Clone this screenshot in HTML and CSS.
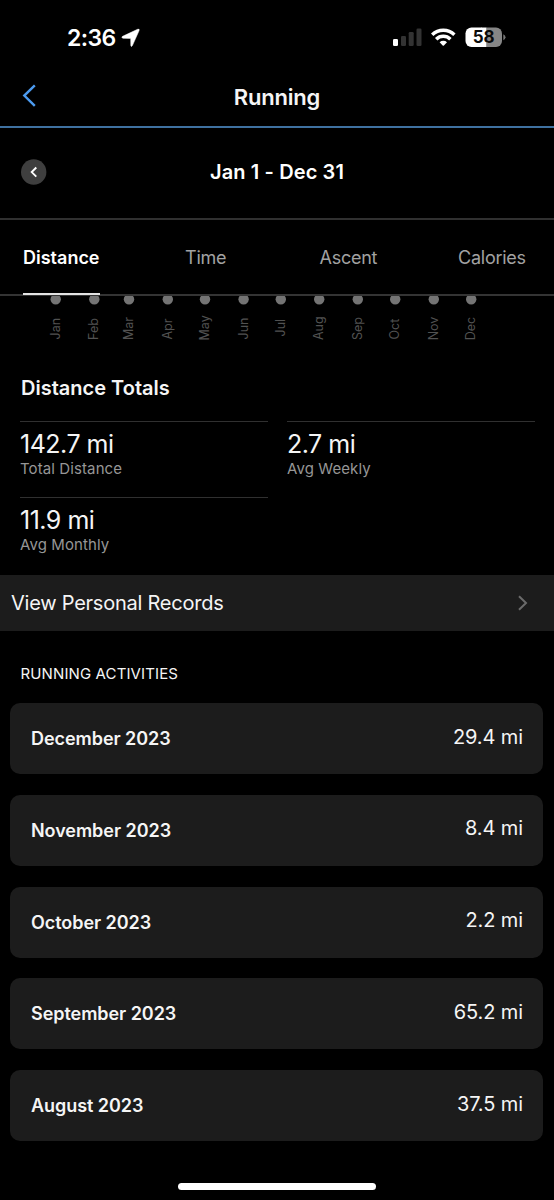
FILE: index.html
```
<!DOCTYPE html>
<html lang="en">
<head>
<meta charset="utf-8">
<title>Running</title>
<link rel="stylesheet" href="styles.css">
</head>
<body>
<div class="screen">
  <header class="status">
    <div class="status-left">
      <span class="clock">2:36</span>
      <svg class="location" width="20" height="20" viewBox="0 0 20 20"><path d="M1.600 8.300 16.600 1.300Q18.900 .5 18 2.800L11.400 17.600Q10.200 19.600 9.800 17.400L9.700 10.400 2 10.300Q-.2 9.600 1.600 8.300Z" fill="#fff" stroke="#fff" stroke-width=".5"/></svg>
    </div>
    <svg class="indicators" width="114" height="22" viewBox="0 0 114 22">
      <rect x="1" y="12" width="5" height="7" rx="1.3" fill="#fff"/>
      <g fill="#333"><rect x="9" y="9" width="5" height="10" rx="1.3"/><rect x="16.7" y="5" width="5" height="14" rx="1.3"/><rect x="24.5" y="1.500" width="5" height="17.500" rx="1.3"/></g>
      <g fill="none" stroke="#fff" stroke-width="3.500"><path d="M40.200 7.700a16.200 16.200 0 0 1 22.200 0"/><path d="M44.200 12.200a10.200 10.200 0 0 1 14.200 0"/></g>
      <path d="M47.600 15.200a5.500 5.500 0 0 1 7.400 0L51.900 18.400Q51.300 18.900 50.700 18.400Z" fill="#fff"/>
      <path d="M79.500.5H89.500V20H79.500A6 6 0 0 1 73.500 14V6.500A6 6 0 0 1 79.500.5Z" fill="#fff"/>
      <path d="M94.500.5H104A6 6 0 0 1 110 6.500V14A6 6 0 0 1 104 20H94.500Z" fill="#868686"/>
      <path d="M89 .5h5.500V20H89Z" fill="#fff"/>
      <path d="M111.300 7.300q2.200.8 2.200 3t-2.200 3Z" fill="#777"/>
      <text class="battery-level" x="91.500" y="16.400" text-anchor="middle">58</text>
    </svg>
  </header>
  <nav class="navbar">
    <svg class="back" width="16" height="24" viewBox="0 0 16 24"><path d="M13.800 2.400 3.300 12.600 13.800 22.900" fill="none" stroke="#4c9bf0" stroke-width="2.400"/></svg>
    <h1 class="title">Running</h1>
  </nav>
  <section class="period">
    <svg class="previous" width="26" height="26" viewBox="0 0 26 26"><circle cx="12.700" cy="13" r="12.700" fill="#3f3f3f"/><path d="M15.300 8.500 10.700 13.100 15.300 17.700" fill="none" stroke="#fff" stroke-width="1.900"/></svg>
    <h2 class="range">Jan 1 - Dec 31</h2>
  </section>
  <div class="tabs">
    <span class="tab active">Distance</span>
    <span class="tab time">Time</span>
    <span class="tab ascent">Ascent</span>
    <span class="tab calories">Calories</span>
  </div>
  <svg class="axis" width="554" height="64" viewBox="0 0 554 64">
    <g fill="#747474"><circle cx="55.700" cy="3.300" r="5.200"/><circle cx="94.300" cy="3.300" r="5.200"/><circle cx="129" cy="3.300" r="5.200"/><circle cx="167.800" cy="3.300" r="5.200"/><circle cx="205" cy="3.300" r="5.200"/><circle cx="243.600" cy="3.300" r="5.200"/><circle cx="280.800" cy="3.300" r="5.200"/><circle cx="319.200" cy="3.300" r="5.200"/><circle cx="357.800" cy="3.300" r="5.200"/><circle cx="395.200" cy="3.300" r="5.200"/><circle cx="433.800" cy="3.300" r="5.200"/><circle cx="471.200" cy="3.300" r="5.200"/></g>
    <g class="months">
      <text transform="translate(60 43.500) rotate(-90)">Jan</text>
      <text transform="translate(98.200 44) rotate(-90)">Feb</text>
      <text transform="translate(133.300 44) rotate(-90)">Mar</text>
      <text transform="translate(172 43.500) rotate(-90)">Apr</text>
      <text transform="translate(209.300 44.500) rotate(-90)">May</text>
      <text transform="translate(248 43.500) rotate(-90)">Jun</text>
      <text transform="translate(285 40.500) rotate(-90)">Jul</text>
      <text transform="translate(323.300 44) rotate(-90)">Aug</text>
      <text transform="translate(362 44) rotate(-90)">Sep</text>
      <text transform="translate(399.300 43.500) rotate(-90)">Oct</text>
      <text transform="translate(438 44.300) rotate(-90)">Nov</text>
      <text transform="translate(475.200 44.300) rotate(-90)">Dec</text>
    </g>
  </svg>
  <section class="totals">
    <h3 class="totals-title">Distance Totals</h3>
    <div class="stats">
      <div class="stat"><span class="value">142.7 mi</span><span class="label">Total Distance</span></div>
      <div class="stat"><span class="value">2.7 mi</span><span class="label">Avg Weekly</span></div>
      <div class="stat"><span class="value">11.9 mi</span><span class="label">Avg Monthly</span></div>
    </div>
  </section>
  <div class="records">
    <span>View Personal Records</span>
    <svg width="10" height="16" viewBox="0 0 10 16"><path d="M1 1.300 8 8 1 14.700" fill="none" stroke="#6b6b6b" stroke-width="2"/></svg>
  </div>
  <section class="activities">
    <h4 class="activities-title">RUNNING ACTIVITIES</h4>
    <div class="card"><span class="month">December 2023</span><span class="miles">29.4 mi</span></div>
    <div class="card"><span class="month">November 2023</span><span class="miles">8.4 mi</span></div>
    <div class="card"><span class="month">October 2023</span><span class="miles">2.2 mi</span></div>
    <div class="card"><span class="month">September 2023</span><span class="miles">65.2 mi</span></div>
    <div class="card"><span class="month">August 2023</span><span class="miles">37.5 mi</span></div>
  </section>
  <div class="home-indicator"></div>
</div>
</body>
</html>
```
FILE: styles.css
```
* { box-sizing: border-box; }
body { margin: 0; background: #000; }
h1, h2, h3, h4 { margin: 0; }
svg { display: block; flex: none; }
.screen {
  width: 554px; height: 1200px; overflow: hidden;
  display: flex; flex-direction: column;
  background: #000; color: #f5f5f5;
  font-family: Inter, "Liberation Sans", sans-serif;
  white-space: nowrap;
}
.status {
  height: 70px; flex: none; padding: 27px 48px 0 67px;
  display: flex; justify-content: space-between; align-items: flex-start;
}
.status-left { display: flex; gap: 5px; }
.clock { font-size: 23px; font-weight: 600; line-height: 22px; letter-spacing: -0.6px; color: #fff; }
.location { margin-top: 1px; }
.battery-level { font-size: 17px; font-weight: 700; letter-spacing: -0.2px; fill: #0a0a0a; }
.navbar {
  height: 58px; flex: none; padding: 13px 21px 0;
  display: grid; grid-template-columns: 16px 1fr 16px;
  border-bottom: 2px solid #3f71a0;
}
.title { font-size: 22px; font-weight: 600; line-height: 28px; letter-spacing: -0.2px; text-align: center; }
.period {
  height: 92px; flex: none; padding: 31px 21px 0;
  display: grid; grid-template-columns: 26px 1fr 26px;
  border-bottom: 2px solid #303030;
}
.range { font-size: 20px; font-weight: 600; line-height: 27px; letter-spacing: 0.12px; text-align: center; color: #fff; }
.tabs {
  height: 76px; flex: none; padding-left: 23px;
  display: flex;
  border-bottom: 2px solid #343434;
}
.tab { font-size: 18px; line-height: 75px; height: 75px; letter-spacing: -0.25px; color: #a2a2a2; }
.tab.active { font-weight: 600; letter-spacing: 0; color: #fff; border-bottom: 2px solid #e3e3e3; }
.time { width: 134.500px; margin-left: 85.500px; }
.ascent { width: 138.500px; }
.axis { overflow: hidden; }
.months { font-size: 12.500px; fill: #525252; }
.totals { height: 215px; flex: none; padding: 17px 19px 0 20px; }
.totals-title { font-size: 20px; font-weight: 600; line-height: 22px; padding-left: 1px; }
.stats { display: grid; grid-template-columns: 248px 248px; column-gap: 19px; margin-top: 22px; }
.stat { height: 76px; border-top: 1px solid #303030; padding-top: 7px; display: flex; flex-direction: column; }
.value { font-size: 25px; line-height: 30px; letter-spacing: -0.5px; }
.label { font-size: 15px; line-height: 20px; letter-spacing: 0.1px; color: #969696; }
.records {
  height: 56px; flex: none; padding: 0 26px 0 11px;
  display: flex; align-items: center; justify-content: space-between;
  background: #1c1c1c; font-size: 20px; letter-spacing: -0.24px;
}
.activities { flex: none; height: 552px; padding: 32px 11px 0 10px; display: flex; flex-direction: column; }
.activities-title { font-size: 15px; font-weight: 400; line-height: 21px; letter-spacing: 0.12px; padding-left: 10.500px; margin-bottom: 19px; }
.card {
  height: 71px; flex: none; margin-bottom: 20.800px; padding: 0 20px 0 21px;
  display: flex; justify-content: space-between; align-items: center;
  background: #1c1c1c; border-radius: 10px;
}
.month { font-size: 18px; font-weight: 600; letter-spacing: -0.05px; }
.miles { font-size: 20px; letter-spacing: -0.1px; padding-bottom: 4px; }
.home-indicator { width: 198px; height: 7px; flex: none; border-radius: 4px; background: #fff; margin: 0 auto; }
```
